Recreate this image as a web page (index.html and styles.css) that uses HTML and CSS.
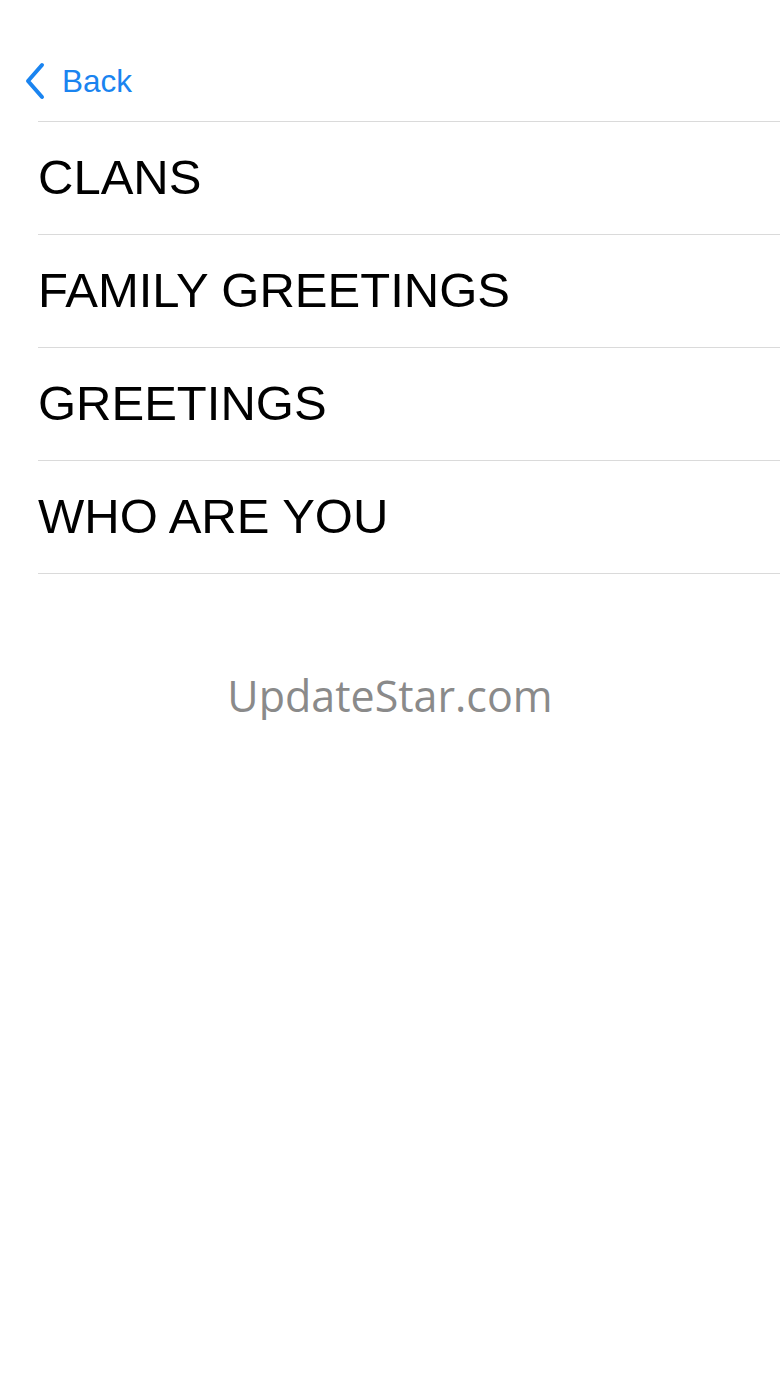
FILE: index.html
```html
<!DOCTYPE html>
<html>
<head>
<meta charset="utf-8">
<link rel="stylesheet" href="styles.css">
</head>
<body>
<div class="nav">
  <div class="back">
    <svg class="chev" width="24" height="38" viewBox="0 0 24 38"><path d="M19 3 L5 19 L19 35" fill="none" stroke="#1a84f0" stroke-width="4" stroke-linecap="round" stroke-linejoin="round"/></svg>
    <span class="back-label">Back</span>
  </div>
</div>
<ul class="list">
  <li class="row">CLANS</li>
  <li class="row">FAMILY GREETINGS</li>
  <li class="row">GREETINGS</li>
  <li class="row">WHO ARE YOU</li>
</ul>
<div class="watermark">UpdateStar.com</div>
</body>
</html>
```
FILE: styles.css
```css
html, body {
  margin: 0;
  padding: 0;
  background: #fff;
}
body {
  width: 780px;
  font-family: "Liberation Sans", Arial, sans-serif;
}
.nav {
  height: 121px;
  box-sizing: border-box;
  padding-top: 40px;
  padding-left: 23px;
  display: flex;
  align-items: center;
}
.back {
  display: flex;
  align-items: center;
  gap: 15px;
  color: #1a84f0;
}
.chev {
  display: block;
}
.back-label {
  font-size: 31.5px;
  line-height: 38px;
}
.list {
  list-style: none;
  margin: 0 0 0 38px;
  padding: 0;
  border-bottom: 1px solid #dadada;
}
.row {
  border-top: 1px solid #dadada;
  height: 112px;
  box-sizing: content-box;
  display: flex;
  align-items: center;
  padding-bottom: 2px;
  height: 110px;
  font-size: 49px;
  color: #000;
}
.watermark {
  margin-top: 98px;
  text-align: center;
  font-family: "Open Sans", "Noto Sans", sans-serif;
  font-size: 43px;
  line-height: 48px;
  color: #8a8a8a;
}
```
